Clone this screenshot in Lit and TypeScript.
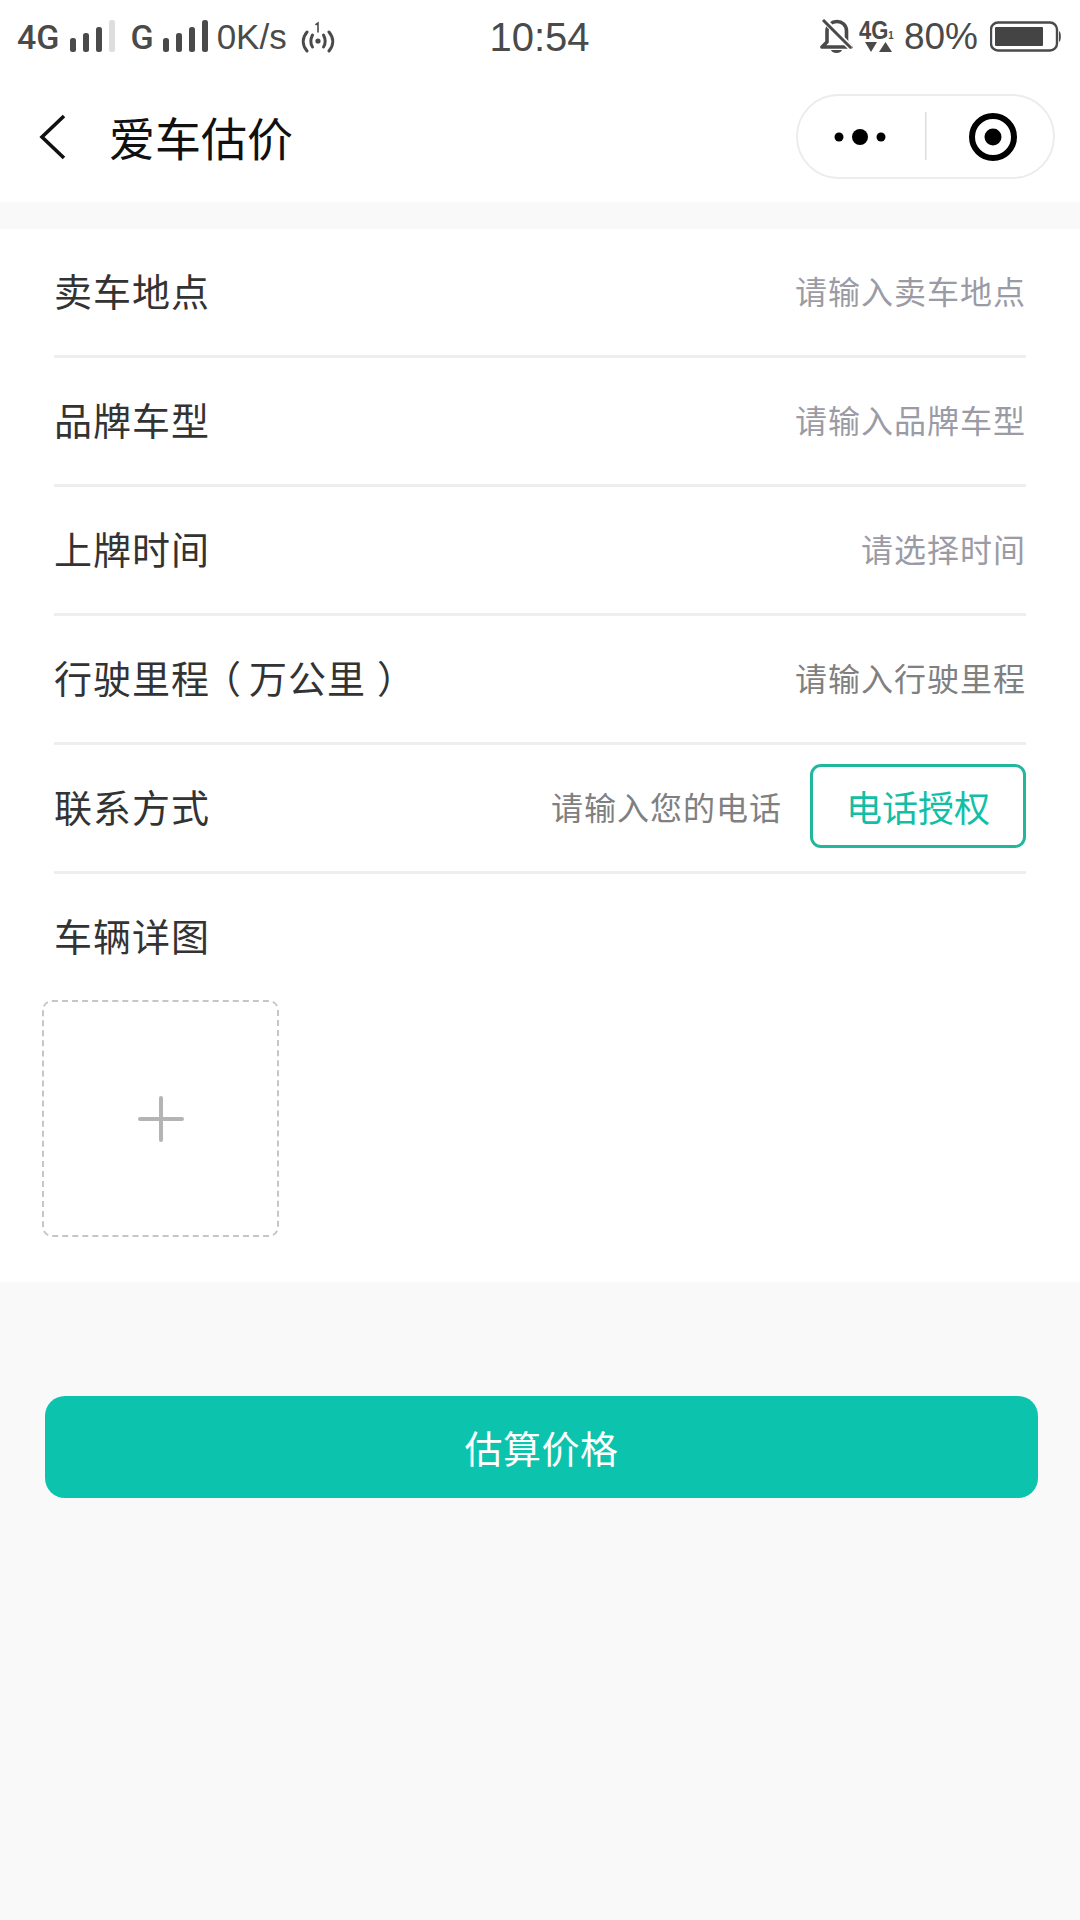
import { LitElement, html, css } from "lit";
import { customElement } from "lit/decorators.js";

const bars = (light: boolean) => html`<svg class="bars" width="46" height="34" viewBox="0 0 46 34">
  <rect x="0" y="18" width="6" height="14" rx="2.5" fill="#4a4a4a"></rect>
  <rect x="13" y="13" width="6" height="19" rx="2.5" fill="#4a4a4a"></rect>
  <rect x="26" y="7" width="6" height="25" rx="2.5" fill="#4a4a4a"></rect>
  <rect x="39" y="0" width="6" height="32" rx="2.5" fill="${light ? "#dedede" : "#4a4a4a"}"></rect>
</svg>`;

@customElement("app-root")
export class AppRoot extends LitElement {
  static styles = css`
    :host {
      display: block;
      width: 1080px;
      min-height: 1920px;
      background: #f9f9f9;
      font-family: "Noto Sans CJK SC", "Noto Sans", sans-serif;
    }
    .status {
      height: 74px;
      background: #fff;
      display: grid;
      grid-template-columns: 1fr auto 1fr;
      align-items: center;
      font-family: "Liberation Sans", Arial, sans-serif;
      color: #4a4a4a;
      padding: 0 18px 0 17px;
      box-sizing: border-box;
    }
    .left, .right { display: flex; align-items: center; }
    .right { justify-content: flex-end; }
    .st { font-size: 35px; line-height: 40px; }
    .st4g { font-family: Roboto, sans-serif; font-weight: 500; font-size: 34px; margin-right: 11px; }
    .stg { font-family: Roboto, sans-serif; font-weight: 500; font-size: 34px; margin: 0 9px 0 14px; }
    .bars { display: block; }
    .speed { margin-left: 8px; margin-right: 14px; }
    .time { font-size: 40px; line-height: 40px; }
    .pct { font-size: 37px; margin: 0 12px 0 3px; }
    .net { margin-left: 5px; }
    .nav {
      height: 128px;
      background: #fff;
      display: flex;
      align-items: center;
      padding: 0 25px 4px 38px;
      box-sizing: border-box;
    }
    .back { display: block; margin: 4px 41px 0 0; }
    .title { font-size: 46px; color: #111; flex: 1; line-height: 60px; }
    .capsule {
      width: 259px;
      height: 85px;
      box-sizing: border-box;
      border: 2px solid #ececec;
      border-radius: 43px;
      display: block;
    }
    .form { background: #fff; margin-top: 27px; padding-bottom: 45px; }
    .row {
      height: 129px;
      margin: 0 54px;
      box-sizing: border-box;
      border-bottom: 3px solid #eeeeee;
      padding-bottom: 5px;
      display: flex;
      align-items: center;
      justify-content: space-between;
    }
    .label { font-size: 38px; letter-spacing: 1px; color: #333; white-space: nowrap; flex: none; }
    .pl { margin: 0 7px 0 -7px; }
    .pr { margin: 0 -11px 0 11px; }
    .ph { font-size: 32px; letter-spacing: 1px; color: #9b9ba6; white-space: nowrap; }
    .ph.dark { color: #808080; }
    .phone { display: flex; align-items: center; }
    .auth {
      width: 216px;
      height: 84px;
      margin-left: 28px;
      box-sizing: border-box;
      border: 3px solid #21b79d;
      border-radius: 11px;
      color: #12bfa6;
      font-size: 36px;
      display: flex;
      align-items: center;
      justify-content: center;
    }
    .photos { height: 126px; margin: 0 54px; padding-bottom: 5px; box-sizing: border-box; display: flex; align-items: center; }
    .upload {
      width: 237px;
      height: 237px;
      margin-left: 42px;
      box-sizing: border-box;
      border: 2px dashed #c6c6c6;
      border-radius: 10px;
      display: flex;
      align-items: center;
      justify-content: center;
    }
    .submit {
      margin: 114px 42px 0 45px;
      height: 102px;
      padding-bottom: 2px;
      box-sizing: border-box;
      border-radius: 20px;
      background: #0cc4ad;
      color: #fff;
      font-size: 38px;
      letter-spacing: 0.5px;
      display: flex;
      align-items: center;
      justify-content: center;
    }
  `;

  private row(label: unknown, ph: string, dark = false) {
    return html`<div class="row">
      <span class="label">${label}</span>
      <span class="ph ${dark ? "dark" : ""}">${ph}</span>
    </div>`;
  }

  render() {
    return html`
      <div class="status">
        <div class="left">
          <span class="st st4g">4G</span>${bars(true)}
          <span class="st stg">G</span>${bars(false)}
          <span class="st speed">0K/s</span>
          <svg width="34" height="32" viewBox="0 0 34 32" fill="none" stroke="#4a4a4a" stroke-width="3" stroke-linecap="round">
            <path d="M6 11 C1 17 1 24 6 30"></path>
            <path d="M11.500 14 C9.500 18 9.500 23 11.500 26"></path>
            <path d="M22.500 14 C24.500 18 24.500 23 22.500 26"></path>
            <path d="M28 11 C33 17 33 24 28 30"></path>
            <circle cx="17" cy="20" r="2.600" fill="#4a4a4a" stroke="none"></circle>
            <path d="M15 3.500 L17 2 V11" stroke-width="1.600"></path>
          </svg>
        </div>
        <div class="time">10:54</div>
        <div class="right">
          <svg width="34" height="36" viewBox="0 0 34 36" fill="none" stroke="#4a4a4a" stroke-width="3.600">
            <path d="M2 28 H31 L26.500 23 V12 C26.500 6 22 2.500 17 2.500 C12 2.500 7 6 7 12 V23 Z" stroke-linejoin="round"></path>
            <path d="M4 1 L31 29" stroke="#fff" stroke-width="6"></path>
            <path d="M3 1 L31 29" stroke-width="3"></path>
            <path d="M11 31 H22 C21 35 12 35 11 31 Z" fill="#4a4a4a" stroke="none"></path>
          </svg>
          <svg class="net" width="42" height="36" viewBox="0 0 42 36">
            <text transform="scale(0.88 1)" x="0" y="20" font-family="Liberation Sans" font-weight="700" font-size="25" fill="#4a4a4a">4G<tspan font-size="11">1</tspan></text>
            <path d="M6 23 H18 L12 33 Z M20 33 H33 L26.500 23 Z" fill="#4a4a4a"></path>
          </svg>
          <span class="st pct">80%</span>
          <svg width="72" height="32" viewBox="0 0 72 32">
            <rect x="1" y="1.500" width="66" height="28" rx="7" fill="none" stroke="#4a4a4a" stroke-width="2.400"></rect>
            <rect x="5" y="6" width="48" height="19" rx="1" fill="#444"></rect>
            <path d="M69 10 C71.500 11 71.500 20 69 21 Z" fill="#4a4a4a"></path>
          </svg>
        </div>
      </div>
      <div class="nav">
        <svg class="back" width="30" height="48" viewBox="0 0 30 48" fill="none" stroke="#111" stroke-width="3.600">
          <path d="M26 2 L4 23 L26 44"></path>
        </svg>
        <div class="title">爱车估价</div>
        <svg class="capsule" viewBox="0 0 255 81">
          <circle cx="41" cy="41" r="4.500"></circle>
          <circle cx="62" cy="41" r="8"></circle>
          <circle cx="83" cy="41" r="4.500"></circle>
          <rect x="127" y="16" width="1.500" height="48" fill="#dedede"></rect>
          <circle cx="195" cy="41" r="21" fill="none" stroke="#000" stroke-width="6"></circle>
          <circle cx="195" cy="41" r="8.500"></circle>
        </svg>
      </div>
      <div class="form">
        ${this.row("卖车地点", "请输入卖车地点")}
        ${this.row("品牌车型", "请输入品牌车型")}
        ${this.row("上牌时间", "请选择时间")}
        ${this.row(html`行驶里程<span class="pl">（</span>万公里<span class="pr">）</span>`, "请输入行驶里程", true)}
        <div class="row">
          <span class="label">联系方式</span>
          <div class="phone">
            <span class="ph dark">请输入您的电话</span>
            <div class="auth">电话授权</div>
          </div>
        </div>
        <div class="photos"><span class="label">车辆详图</span></div>
        <div class="upload">
          <svg width="46" height="46" viewBox="0 0 46 46" stroke="#b4b4b4" stroke-width="4" stroke-linecap="round">
            <path d="M23 2 V44 M2 23 H44"></path>
          </svg>
        </div>
      </div>
      <div class="submit">估算价格</div>
    `;
  }
}
